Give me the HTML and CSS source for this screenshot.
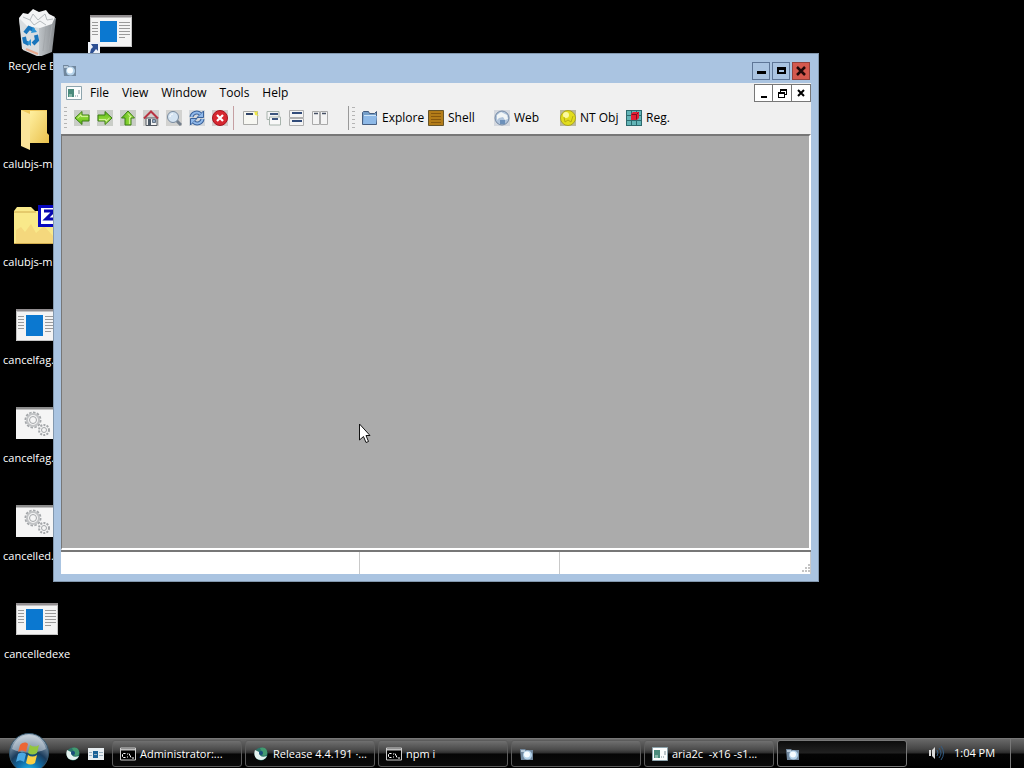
FILE: index.html
```html
<!DOCTYPE html>
<html lang="en">
<head>
<meta charset="utf-8">
<title>Desktop</title>
<link rel="stylesheet" href="styles.css">
</head>
<body>
<svg class="defs" aria-hidden="true">
  <defs>
    <linearGradient id="gGreen" x1="0" y1="0" x2="0" y2="1"><stop offset="0" stop-color="#b5ec54"/><stop offset="1" stop-color="#58b812"/></linearGradient>
    <linearGradient id="gFolder" x1="0" y1="0" x2="1" y2="1"><stop offset="0" stop-color="#fff0a0"/><stop offset="1" stop-color="#e9c04c"/></linearGradient>
    <linearGradient id="gBin" x1="0" y1="0" x2="1" y2="0"><stop offset="0" stop-color="#dfe3e6"/><stop offset=".5" stop-color="#c4c9cd"/><stop offset="1" stop-color="#85898d"/></linearGradient>
    <radialGradient id="gOrb" cx=".5" cy="1" r="1"><stop offset="0" stop-color="#27c4f4"/><stop offset=".3" stop-color="#0f70ac"/><stop offset=".55" stop-color="#1b3c5c"/><stop offset="1" stop-color="#bdcad6"/></radialGradient>
    <symbol id="exe" viewBox="0 0 42 32">
      <path d="M0 0h42v32H0z" fill="#f4f4f4"/><path d="M0 0h42v2.500H0z" fill="#928e90"/><path d="M.5 2v29.500h41V2" fill="none" stroke="#c4c4c4"/>
      <path d="M10 6h17v21H10z" fill="#0b78d0"/>
      <path d="M2 7.500h6M2 10.500h6M2 13.500h6M2 16.500h6M2 19.500h6M29 7.500h11M29 10.500h11M29 13.500h11M29 16.500h11M29 19.500h11M29 22.500h6" stroke="#9a9a9a"/>
    </symbol>
    <symbol id="gears" viewBox="0 0 42 32">
      <path d="M0 0h42v32H0z" fill="#f5f5f5"/><path d="M0 0h42v2.500H0z" fill="#8d8d8d"/>
      <g fill="none" stroke="#a4a7aa"><circle cx="17" cy="13" r="7.500" stroke-width="2" stroke-dasharray="2.500 1.400"/><circle cx="17" cy="13" r="6" stroke="#c2c4c6" stroke-width="2"/><circle cx="17" cy="13" r="3.500"/>
      <circle cx="28" cy="23" r="5" stroke-width="2" stroke-dasharray="2 1.200"/><circle cx="28" cy="23" r="2.500"/></g>
    </symbol>
    <symbol id="cam" viewBox="0 0 16 16">
      <path d="M1 3h5l1 1h7v10H2z" fill="#71879d"/><path d="M2 4h4v2H2z" fill="#b8c9d8"/><circle cx="8.500" cy="9" r="4.500" fill="#b4d2ea"/><circle cx="8" cy="8.500" r="3" fill="#f5fbff"/>
    </symbol>
    <symbol id="app" viewBox="0 0 16 14">
      <path d="M.5.500h15v13H.5z" fill="#fbfdfd" stroke="#8da4ad"/><path d="M2 3h6v8H2z" fill="#4a8a7b"/><path d="M3 8h3v3H3z" fill="#83b5a7"/><path d="M9 10h1M11 10h1M13 4v4" stroke="#7a8d94"/>
    </symbol>
    <symbol id="cmd" viewBox="0 0 16 13">
      <path d="M.5.500h15v12H.5z" fill="#000" stroke="#ccc"/><path d="M1 1h14v2H1z" fill="#bbb"/><path d="M5.500 6H3.500L2.500 7v2l1 1h2M7.500 6v1M7.500 9v1M9 6l2 4M12 10.500h2" fill="none" stroke="#fff"/>
    </symbol>
    <symbol id="edge" viewBox="0 0 16 16">
      <circle cx="8" cy="8" r="6.500" fill="#2b766a"/><path d="M2 4c-2 6 1 10 6 10 3 0 5-2 6-4-5 2-8 0-8-4z" fill="#e3f2ef"/><path d="M7 2c5-2 8 2 7 6-1 2-4 2-5 1 2-3-1-4-2-7z" fill="#429a70"/><circle cx="8" cy="7" r="2" fill="#184c7c"/>
    </symbol>
    <symbol id="arrow" viewBox="0 0 16 16">
      <path d="M0 0h16v16H0z" fill="#c9cdc7"/><path d="M1 8l7-6.500V5h7v6H8v3.500z" fill="url(#gGreen)" stroke="#3c7d18"/><path d="M3.500 8L7 4.800V6.300h7" fill="none" stroke="#dcf8a8"/>
    </symbol>
  </defs>
</svg>

<main class="desktop">
  <ul class="shortcuts">
    <li class="shortcut"><svg class="pic" viewBox="0 0 48 48"><path d="M6 10l4 32 16 7 13-5 4-34z" fill="url(#gBin)"/><path d="M6 10l3 31 17 7V16z" fill="#d9dde0"/><path d="M6 10l4-5 5 1 5-5 6 3 7-2 3 4 6 3-3 7-12 4-13-2z" fill="#f3f4f5"/><path d="M10 9l7 3 3-6 5 6 7-6 2 6 6-1M17 12l4 5 6-4 6 4" fill="none" stroke="#b5babd"/><path d="M39 17l-4 25M33 19l-3 24" stroke="#a4a8ac"/><g fill="none" stroke="#1975bc" stroke-width="4"><path d="M12 25l4-5 5 2M23 27l1 5-4 4M16 36l-4-2-1-5"/></g><path d="M20 19l4 5-6 1zM18 31v7l-4-3z" fill="#2b94d6"/><path d="M13 41l12 5" stroke="#e7aa90" stroke-width="2"/></svg><span>Recycle Bin</span></li>
    <li class="shortcut long"><svg class="pic" viewBox="0 0 48 48"><path d="M8 4h26v23l2 2v8H16z" fill="#eec75b"/><path d="M8 4l9 4v36l-9-4z" fill="#fbe49a"/><path d="M17 5h17v23l2 2v7H17z" fill="url(#gFolder)"/></svg><span>calubjs-m...</span></li>
    <li class="shortcut long"><svg class="pic" viewBox="0 0 48 48"><path d="M1 7l3-4h14l4 4h24v33H1z" fill="#f9e98a"/><path d="M1 8h22M1 39.500h45" stroke="#d0ac4e"/><path d="M3 26l5-3 4 5 6-8 5 9 8-7 9 10v7H3z" fill="#f0c46c" opacity=".45"/><path d="M25 1h22v22H25z" fill="#0808c0"/><path d="M28 4h18v16H28z" fill="#fff"/><path d="M31 7h10l-8 8h9" fill="none" stroke="#0808b0" stroke-width="3"/></svg><span>calubjs-m...</span></li>
    <li class="shortcut long"><svg class="tile"><use href="#exe"/></svg><span>cancelfag...</span></li>
    <li class="shortcut long"><svg class="tile"><use href="#gears"/></svg><span>cancelfag...</span></li>
    <li class="shortcut long"><svg class="tile"><use href="#gears"/></svg><span>cancelled...</span></li>
    <li class="shortcut"><svg class="tile"><use href="#exe"/></svg><span>cancelledexe</span></li>
    <li class="shortcut linked"><svg class="tile"><use href="#exe"/></svg><svg class="link-badge" viewBox="0 0 12 12"><path d="M0 0h12v12H0z" fill="#eef2f8"/><path d="M3 2h7v7L8 7l-3 4H2l1-4 2-2z" fill="#2c4f93"/></svg></li>
  </ul>

  <section class="window" aria-label="Application window">
    <header class="titlebar">
      <svg class="ico"><use href="#cam"/></svg>
      <div class="caption">
        <button aria-label="Minimize"><svg viewBox="0 0 16 16"><path d="M4 8h9v3H4z"/></svg></button>
        <button aria-label="Maximize"><svg viewBox="0 0 16 16"><path d="M4 4h9v7H4zm2 3v2h5V7z" fill-rule="evenodd"/></svg></button>
        <button class="close" aria-label="Close"><svg viewBox="0 0 16 16"><path d="M4 4l8 8M12 4l-8 8" stroke="#200808" stroke-width="2.500"/></svg></button>
      </div>
    </header>
    <div class="client">
      <nav class="menubar">
        <svg class="app-ico"><use href="#app"/></svg>
        <button>File</button><button>View</button><button>Window</button><button>Tools</button><button>Help</button>
        <div class="mdi-caption">
          <button aria-label="Minimize child"><svg viewBox="0 0 16 16"><path d="M5 11h6v2H5z"/></svg></button>
          <button aria-label="Restore child"><svg viewBox="0 0 16 16"><path d="M6 4h7v6h-2v3H4V7h2zm1 2v1h4v2h1V6zM5 9v3h5V9z" fill-rule="evenodd"/></svg></button>
          <button aria-label="Close child"><svg viewBox="0 0 16 16"><path d="M5 5l6 6M11 5l-6 6" stroke="#000" stroke-width="2"/></svg></button>
        </div>
      </nav>
      <div class="toolbar">
        <span class="grip"></span>
        <div class="group">
          <button aria-label="Back"><svg class="ico"><use href="#arrow"/></svg></button>
          <button aria-label="Forward"><svg class="ico" viewBox="0 0 16 16"><use href="#arrow" transform="rotate(180 8 8)"/></svg></button>
          <button aria-label="Up"><svg class="ico" viewBox="0 0 16 16"><use href="#arrow" transform="rotate(90 8 8)"/></svg></button>
          <button aria-label="Home"><svg class="ico" viewBox="0 0 16 16"><path d="M0 0h16v16H0z" fill="#d0d0ce"/><path d="M3 8h11v7.500H3z" fill="#f2f2f2" stroke="#525860"/><path d="M1 8.500L8 1.500l7 7" fill="none" stroke="#b83442" stroke-width="2"/><path d="M5 9h3v6H5z" fill="#4d5a68"/><path d="M9.500 9.500h3v3h-3z" fill="#92a8c2" stroke="#657484"/></svg></button>
          <button aria-label="Search"><svg class="ico" viewBox="0 0 16 16"><path d="M0 0h16v16H0z" fill="#d2d2d0"/><path d="M10 10l5 5" stroke="#747f8c" stroke-width="3"/><circle cx="7" cy="7" r="5.500" fill="#d4e3f1" stroke="#788a9e"/><path d="M4 7c0-2 1-3 3-3" fill="none" stroke="#fff"/></svg></button>
          <button aria-label="Refresh"><svg class="ico" viewBox="0 0 16 16"><path d="M0 0h16v16H0z" fill="#d4d8dc"/><path d="M2.500 7C3 3 8 1 11.500 4M13.500 9C13 13 8 15 4.500 12" fill="none" stroke="#3a629b" stroke-width="4"/><path d="M14.500 1v6.500H8zM1.500 15V8.500H8z" fill="#8fb8ea" stroke="#3a629b"/><path d="M2.500 7C3 3 8 1 11.500 4M13.500 9C13 13 8 15 4.500 12" fill="none" stroke="#8fb8ea" stroke-width="2"/></svg></button>
          <button aria-label="Stop"><svg class="ico" viewBox="0 0 16 16"><path d="M0 0h16v16H0z" fill="#d2cccc"/><circle cx="8" cy="8" r="7.500" fill="#d72730" stroke="#a41420"/><path d="M5 5l6 6M11 5l-6 6" stroke="#fff" stroke-width="2.200"/></svg></button>
        </div>
        <span class="rule pink"></span>
        <div class="group">
          <button aria-label="New window"><svg class="ico" viewBox="0 0 16 16"><path d="M.5 1.500h14v13H.5z" fill="#f7f7f2" stroke="#aaaaa8"/><path d="M3 4h7" stroke="#304468" stroke-width="2"/><path d="M11 0l1 2 3-1-1 3 2 2-4-1z" fill="#f1ea47"/></svg></button>
          <button aria-label="Cascade"><svg class="ico" viewBox="0 0 16 16"><path d="M1 1.500h12v8H1z" fill="#f4f4f4" stroke="#a8b4ad"/><path d="M3.500 7h11v8h-11z" fill="#f8f8f8" stroke="#a8b4ad"/><path d="M4 4h8M6 9h6" stroke="#3c567e" stroke-width="2"/></svg></button>
          <button aria-label="Tile horizontally"><svg class="ico" viewBox="0 0 16 16"><path d="M.5.500h14v7H.5zM.5 8.500h14v7H.5z" fill="#f4f4f4" stroke="#afafaf"/><path d="M3 3h10M3 11h10" stroke="#324c7a" stroke-width="2"/></svg></button>
          <button aria-label="Tile vertically"><svg class="ico" viewBox="0 0 16 16"><path d="M.5 1.500h7v13h-7zM8.500 1.500h7v13h-7z" fill="#f4f4f4" stroke="#aaa"/><path d="M2 3.500h4M10 3.500h4" stroke="#465064" stroke-width="1.500"/></svg></button>
        </div>
        <span class="rule band"></span>
        <span class="grip"></span>
        <div class="launchers">
          <button><svg class="ico" viewBox="0 0 16 16"><path d="M.5 14.500v-12l1-1h5l1 2h5l2-2v13z" fill="#769fc9" stroke="#465e80"/><path d="M2 6h13l-1 8H1z" fill="#8eb9e7"/><path d="M2 5.500h12" stroke="#d0e6f8"/></svg>Explore</button>
          <button><svg class="ico" viewBox="0 0 16 16"><path d="M.5.500h15v15H.5z" fill="#b37c18" stroke="#675529"/><path d="M3 3.500h10M3 6.500h10M3 9.500h10M3 12.500h10" stroke="#87580e"/></svg>Shell</button>
          <button><svg class="ico" viewBox="0 0 16 16"><path d="M0 0h16v16H0z" fill="#d4d8df"/><circle cx="8" cy="8" r="7" fill="#b0c4dc" stroke="#768aa4"/><path d="M3 5l4-3 6 3 1 4-3 1-2-3-4 1-2 2z" fill="#f1f5f6"/><path d="M6 10h5v4H6z" fill="#6c90ba"/></svg>Web</button>
          <button><svg class="ico" viewBox="0 0 16 16"><path d="M0 0h16v16H0z" fill="#bab8a2"/><circle cx="8" cy="8" r="7.500" fill="#e2dd1c" stroke="#aaa428"/><circle cx="6" cy="5" r="3" fill="#fbf9a1"/><path d="M4 7l1 5 3-2 3 2 2-6" fill="none" stroke="#b7ac15"/></svg>NT Obj</button>
          <button><svg class="ico" viewBox="0 0 16 16"><path d="M0 0h16v16H0z" fill="#62b4b6"/><path d="M.5 0v16M5.500 0v16M10.500 0v16M15.500 0v16M0 .5h16M0 5.500h16M0 10.500h16M0 15.500h16" stroke="#2c6a6e"/><path d="M5 4l2-2h6v6l-2 2H5z" fill="#e41f34"/><path d="M5.500 4.500h5v5M10.500 4.500l2-2" fill="none" stroke="#791020"/></svg>Reg.</button>
        </div>
      </div>
      <div class="workspace"></div>
      <footer class="status"><span></span><span></span><span></span><svg class="sizer" viewBox="0 0 12 12"><path d="M9 3h2M6 6h2M9 6h2M3 9h2M6 9h2M9 9h2" stroke="#c4c4c4" stroke-width="2"/></svg></footer>
    </div>
  </section>

  <svg class="pointer" viewBox="0 0 12 20" aria-hidden="true"><path d="M.5.500v16l4-3.500 2.500 6 2.500-1-2.500-6H11z" fill="#fff" stroke="#111"/></svg>
</main>

<footer class="taskbar">
  <button class="start" aria-label="Start"><svg viewBox="0 0 40 40"><circle cx="20" cy="20" r="19.500" fill="url(#gOrb)" stroke="#35566c"/><path d="M3 16C6 5 14 2 20 2s14 3 17 14c-10 5-24 5-34 0z" fill="#e8eef2" opacity=".45"/><path d="M11 12c3-3 6-3 8-1l-2 8c-3-2-5-2-8 0z" fill="#ec6535"/><path d="M21 12c3 2 6 2 9 0l-2 8c-3 2-6 2-9 0z" fill="#93c63e"/><path d="M9 21c3-2 5-2 8 0l-2 8c-3-2-5-2-8 0z" fill="#4aa8e2"/><path d="M19 22c3 2 6 2 9 0l-2 8c-3 2-6 2-9 0z" fill="#fbd044"/></svg></button>
  <div class="quick">
    <button aria-label="Browser"><svg class="ico"><use href="#edge"/></svg></button>
    <button aria-label="Program"><svg class="ico" viewBox="0 0 16 14"><path d="M0 1h16v12H0z" fill="#e7edf0"/><path d="M5 4h5v7H5z" fill="#1b6296"/><path d="M1 5.500h3M1 8.500h3M11 5.500h4M11 8.500h4M6 7.500h3" stroke="#9ab0bf"/></svg></button>
  </div>
  <div class="tasks">
    <button class="task"><svg class="ico"><use href="#cmd"/></svg><span>Administrator:...</span></button>
    <button class="task"><svg class="ico"><use href="#edge"/></svg><span>Release 4.4.191 ·...</span></button>
    <button class="task"><svg class="ico"><use href="#cmd"/></svg><span>npm i</span></button>
    <button class="task" aria-label="Window"><svg class="ico"><use href="#cam"/></svg></button>
    <button class="task"><svg class="ico"><use href="#app"/></svg><span>aria2c&nbsp; -x16 -s1...</span></button>
    <button class="task active" aria-label="Current window"><svg class="ico"><use href="#cam"/></svg></button>
  </div>
  <div class="tray">
    <svg class="ico" viewBox="0 0 16 16"><path d="M1 5h2v6H1zM4 5l3-3v12l-3-3z" fill="#dadada"/><path d="M9 5q2 3 0 6M11 3q4 5 0 10M13 1q5 7 0 14" fill="none" stroke="#345d84"/></svg>
    <time>1:04 PM</time>
  </div>
  <button class="show-desktop" aria-label="Show desktop"></button>
</footer>
</body>
</html>
```
FILE: styles.css
```css
* { box-sizing: border-box; }
body {
  margin: 0;
  height: 100vh;
  display: flex;
  flex-direction: column;
  overflow: hidden;
  background: #000;
  color: #000;
  font: 12px/16px "Open Sans", "Noto Sans", sans-serif;
}
button {
  margin: 0;
  padding: 0;
  border: 0;
  background: none;
  color: inherit;
  font: inherit;
  display: flex;
  align-items: center;
}
svg { display: block; flex: none; }
.defs { position: absolute; width: 0; height: 0; }
.ico { width: 16px; height: 16px; }

.desktop { flex: 1; position: relative; min-height: 0; }
.shortcuts {
  margin: 0;
  padding: 0;
  list-style: none;
  display: grid;
  grid-auto-flow: column;
  grid-template-rows: repeat(7, 98px);
  grid-auto-columns: 74px;
  justify-content: start;
}
.shortcut {
  display: flex;
  flex-direction: column;
  align-items: center;
  padding-top: 8px;
  color: #fff;
  font-size: 11px;
  white-space: nowrap;
  position: relative;
}
.long span { width: 68px; }
.pic { width: 48px; height: 48px; margin-bottom: 2px; }
.tile { width: 42px; height: 32px; margin: 7px 0 11px; }
.link-badge { position: absolute; left: 14px; top: 42px; width: 12px; height: 12px; }

.window {
  position: absolute;
  inset: 53px 205px 156px 53px;
  display: flex;
  flex-direction: column;
  padding: 0 7px 7px;
  background: #aac4e1;
  border: 1px solid #8398ae;
}
.titlebar { flex: none; height: 29px; display: flex; justify-content: space-between; padding: 8px 0 0 1px; }
.caption { display: flex; gap: 2px; padding-right: 1px; }
.caption button { width: 18px; height: 18px; justify-content: center; border: 1px solid #5e7697; }
.caption .close { background: #d4594e; border-color: #93413c; }
.caption svg, .mdi-caption svg { width: 16px; height: 16px; }
.client { flex: 1; min-height: 0; display: flex; flex-direction: column; background: #f0f0f0; }
.menubar { flex: none; height: 20px; display: flex; align-items: center; gap: 13px; padding-left: 5px; }
.app-ico { width: 16px; height: 14px; margin-right: -5px; }
.mdi-caption { margin-left: auto; display: flex; }
.mdi-caption button { width: 19px; height: 18px; justify-content: center; background: #fff; border: 1px solid #777; border-left-width: 0; }
.mdi-caption button:first-child { border-left-width: 1px; }
.toolbar { flex: none; height: 31px; display: flex; align-items: center; padding: 0 0 2px 3px; }
.grip { width: 3px; height: 22px; margin-right: 7px; background: repeating-linear-gradient(#b4b4b4 0 1px, transparent 1px 4px); }
.group { display: flex; gap: 7px; }
.rule { width: 1px; height: 24px; background: #999; }
.pink { margin: 0 9px 0 5px; background: #c59fa2; }
.band { margin: 0 3px 0 20px; }
.launchers { display: grid; grid-auto-flow: column; grid-auto-columns: 66px; }
.launchers button { gap: 4px; white-space: nowrap; }
.workspace { flex: 1; background: #ababab; border: solid; border-width: 2px 2px 2px 1px; border-color: #777 #fff #fff #777; }
.status {
  flex: none;
  height: 24px;
  display: grid;
  grid-template-columns: 299px 200px 1fr;
  background: #fff;
  border-top: 2px solid #777;
  position: relative;
}
.status span { border-right: 1px solid #c9c9c9; }
.sizer { position: absolute; right: 0; bottom: 0; width: 12px; height: 12px; }
.pointer { position: absolute; left: 359px; top: 423px; width: 12px; height: 21px; }

.taskbar {
  flex: none;
  height: 30px;
  display: flex;
  color: #fff;
  font-size: 11px;
  background: linear-gradient(#696969 0, #454545 35%, #292929 49%, #050505 51%, #000);
  border-top: 1px solid #777;
}
.start { width: 40px; height: 40px; margin: -6px 16px 0 9px; flex: none; z-index: 1; }
.start svg { width: 40px; height: 40px; }
.quick { display: flex; gap: 7px; width: 47px; flex: none; }
.tasks { flex: 1; display: grid; grid-template-columns: repeat(6, minmax(0, 1fr)); gap: 3px; }
.task {
  height: 27px;
  margin-top: 1px;
  padding-left: 7px;
  gap: 4px;
  border: 1px solid #5c5c5c;
  border-radius: 3px;
  background: linear-gradient(#707070 0, #4a4a4a 35%, #2b2b2b 49%, #050505 51%, #0b0b0b);
  white-space: nowrap;
  overflow: hidden;
}
.task.active { background: linear-gradient(#0c0c0c 0, #222 49%, #050505 51%, #000); border-color: #777; }
.tray { display: flex; align-items: center; gap: 10px; width: 103px; padding: 0 0 2px 21px; flex: none; }
.show-desktop { width: 14px; border-left: 1px solid #777; }
```
